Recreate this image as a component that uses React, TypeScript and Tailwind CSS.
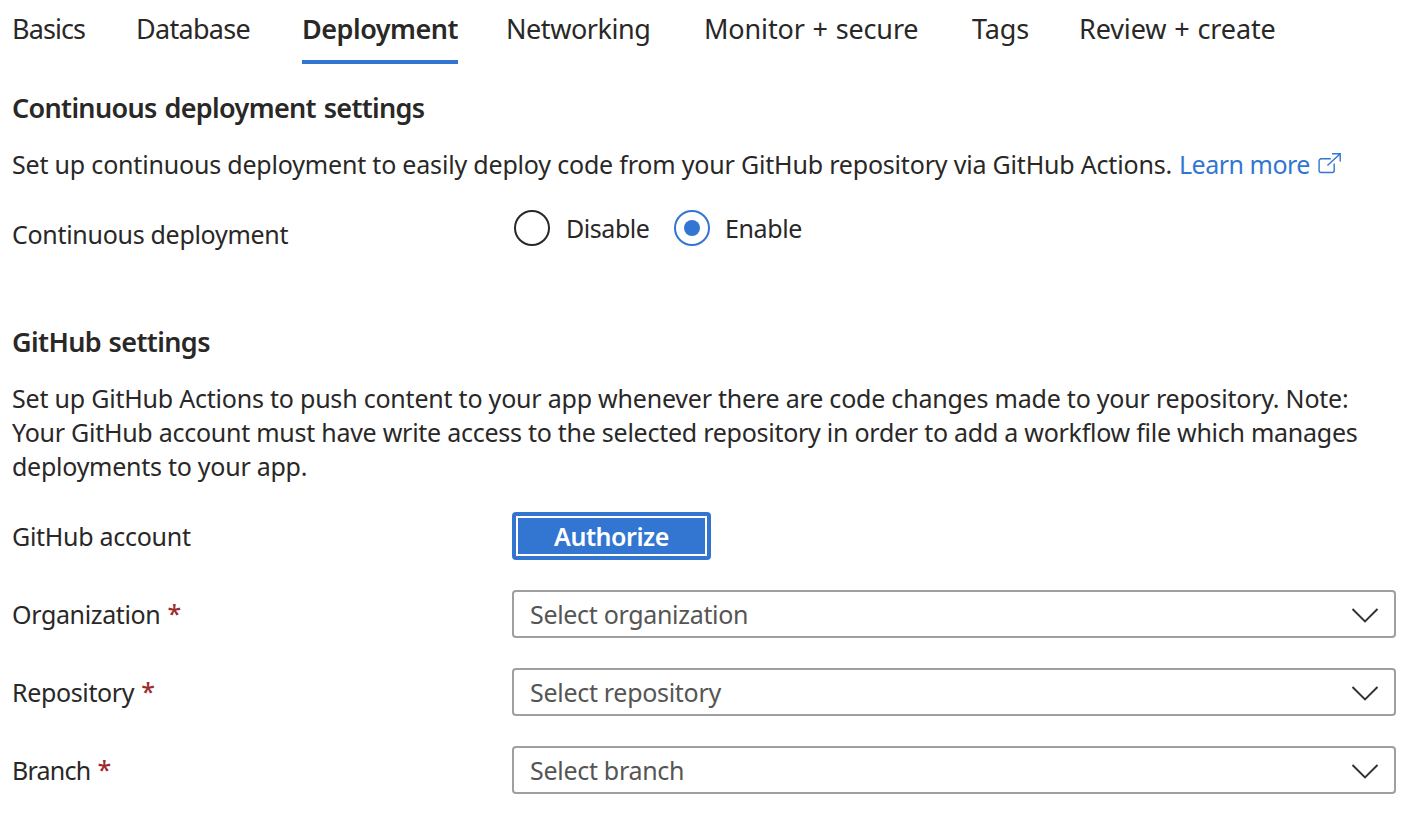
import React from "react";

const tabs = [
  { text: "Basics", cls: "w-[124px] tracking-[-0.9px]" },
  { text: "Database", cls: "w-[166px] tracking-[-0.7px]" },
  { text: "Deployment", cls: "w-[156px] mr-[48px] tracking-[-0.49px]", active: true },
  { text: "Networking", cls: "w-[198px] tracking-[-0.45px]" },
  { text: "Monitor + secure", cls: "w-[268px] tracking-[-0.15px] [word-spacing:1px]" },
  { text: "Tags", cls: "w-[107px] tracking-[-0.1px]" },
  { text: "Review + create", cls: "w-[200px] tracking-[-0.12px] [word-spacing:1px]" },
];

const fields = [
  { label: "Organization", labelCls: "tracking-[-0.36px]", gap: "ml-[7px]", value: "Select organization", valueCls: "tracking-[-0.32px]" },
  { label: "Repository", labelCls: "tracking-[-0.36px]", gap: "ml-[7px]", value: "Select repository", valueCls: "tracking-[-0.3px]" },
  { label: "Branch", labelCls: "tracking-[-0.75px]", gap: "ml-[7px]", value: "Select branch", valueCls: "tracking-[-0.3px]" },
];

function ExternalIcon() {
  return (
    <svg className="ml-[8px] mt-[5px]" width="24" height="22" viewBox="0 0 24 22" fill="none" stroke="currentColor" strokeWidth="1.4">
      <path d="M12.8 6.8H3.1a2 2 0 0 0-2 2v9.7a2 2 0 0 0 2 2h11.1a2 2 0 0 0 2-2V11.4" />
      <path d="M9.4 13.6 22 1.9M14 1.8h8.2V9.4" />
    </svg>
  );
}

export default function App() {
  return (
    <main className="h-[830px] w-[1420px] overflow-hidden bg-white pl-3 font-['Noto_Sans','Open_Sans',sans-serif] text-[25px] leading-[34px] whitespace-nowrap text-[#292827]">
      <nav className="flex h-16 text-[27px] leading-9">
        {tabs.map((t) => (
          <button
            key={t.text}
            className={`flex h-16 shrink-0 border-b-4 pt-[11px] text-left ${t.cls} ${t.active ? "border-[#3276d1] font-semibold" : "border-transparent"}`}
          >
            {t.text}
          </button>
        ))}
      </nav>

      <section>
        <h2 className="mt-[26px] text-[27px] leading-9 font-semibold tracking-[-0.67px] [word-spacing:1.5px]">
          Continuous deployment settings
        </h2>
        <p className="mt-[21px] flex h-[34px]">
          <span className="w-[1167px] tracking-[-0.19px]">
            Set up continuous deployment to easily deploy code from your GitHub repository via GitHub Actions.
          </span>
          <a className="flex text-[#3276d1]">
            <span className="w-[131px] tracking-[-0.5px]">Learn more</span>
            <ExternalIcon />
          </a>
        </p>
        <div className="mt-[29px] flex h-[42px] items-start">
          <span className="w-[502px] pt-[7px] tracking-[-0.3px]">Continuous deployment</span>
          <label className="flex w-[160px] items-center">
            <span className="size-9 rounded-full border-2 border-[#292827]" />
            <span className="ml-4 tracking-[-0.45px]">Disable</span>
          </label>
          <label className="flex items-center">
            <span className="flex size-9 items-center justify-center rounded-full border-2 border-[#3276d1]">
              <span className="size-4 rounded-full bg-[#3276d1]" />
            </span>
            <span className="ml-[15px] tracking-[-0.4px]">Enable</span>
          </label>
        </div>
      </section>

      <section>
        <h2 className="mt-[72px] text-[27px] leading-9 font-semibold tracking-[-0.6px] [word-spacing:1px]">GitHub settings</h2>
        <p className="mt-[21px]">
          <span className="block tracking-[-0.215px]">
            Set up GitHub Actions to push content to your app whenever there are code changes made to your repository. Note:
          </span>
          <span className="block tracking-[-0.26px]">
            Your GitHub account must have write access to the selected repository in order to add a workflow file which manages
          </span>
          <span className="block tracking-[-0.26px]">deployments to your app.</span>
        </p>

        <div className="mt-[29px] flex h-12 items-center">
          <span className="w-[500px] tracking-[-0.28px]">GitHub account</span>
          <button className="h-12 w-[199px] rounded-[4px] bg-[#3276d1] p-1 text-white">
            <span className="flex h-10 items-center justify-center border-2 border-white font-semibold tracking-[-0.45px]">
              Authorize
            </span>
          </button>
        </div>

        {fields.map((f) => (
          <div key={f.label} className="mt-[30px] flex h-12 items-center">
            <label className="flex w-[500px]">
              <span className={f.labelCls}>{f.label}</span>
              <span className={`-mt-px font-medium text-[#9b2c2e] ${f.gap}`}>*</span>
            </label>
            <div className="flex h-12 w-[884px] items-center justify-between rounded-[4px] border-2 border-[#a09f9e] pr-[15px] pl-4 text-[#565554]">
              <span className={f.valueCls}>{f.value}</span>
              <svg className="mt-px" width="28" height="16" viewBox="0 0 28 16" fill="none" stroke="#333231" strokeWidth="2">
                <path d="M1.5 2 14 14.4 26.5 2" />
              </svg>
            </div>
          </div>
        ))}
      </section>
    </main>
  );
}
